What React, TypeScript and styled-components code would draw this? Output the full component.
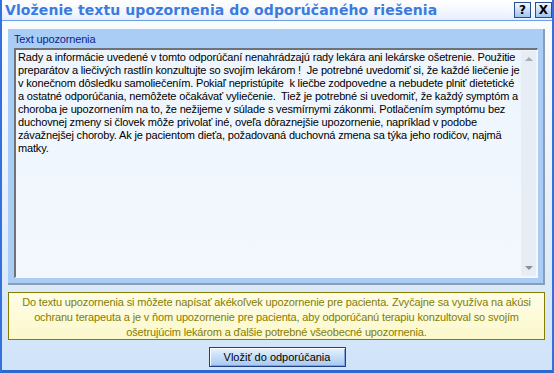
import React from "react";
import styled, { createGlobalStyle } from "styled-components";

const Global = createGlobalStyle`
  html, body { margin: 0; padding: 0; width: 554px; height: 373px; overflow: hidden; }
  body { font-family: Tahoma, "Liberation Sans", Arial, sans-serif; }
`;

const Window = styled.div`
  box-sizing: border-box;
  width: 554px;
  height: 373px;
  display: flex;
  flex-direction: column;
  border-left: 2px solid #3470de;
  border-right: 2px solid #3470de;
  border-bottom: 3px solid #2f66d0;
  background: linear-gradient(180deg, #fbfdff 0%, #eef5fd 40%, #cfe3f9 100%);
`;

const TitleBar = styled.div`
  height: 20px;
  flex: 0 0 20px;
  display: flex;
  align-items: center;
  justify-content: space-between;
  padding: 0 0 0 3px;
  border-bottom: 1px solid #6d9fe6;
  background: linear-gradient(180deg, #ffffff 0%, #f2f7fe 60%, #e4eefb 100%);
`;

const Title = styled.div`
  font-family: "DejaVu Sans", Verdana, sans-serif;
  font-weight: bold;
  font-size: 14px;
  letter-spacing: 0.1px;
  color: #3b7be0;
  white-space: nowrap;
`;

const CaptionButtons = styled.div`
  display: flex;
  gap: 4px;
  align-self: flex-start;
  margin-top: 2px;
`;

const CaptionButton = styled.div`
  box-sizing: border-box;
  width: 17px;
  height: 16px;
  border: 1px solid #2b4f8c;
  background: linear-gradient(180deg, #f2f8ff 0%, #c4dcf7 55%, #9fc3ef 100%);
  display: flex;
  align-items: center;
  justify-content: center;
  font-family: "DejaVu Sans", Verdana, sans-serif;
  font-weight: bold;
  font-size: 12px;
  color: #000;
  line-height: 1;
`;

const Body = styled.div`
  flex: 1;
  display: flex;
  flex-direction: column;
  align-items: stretch;
  padding: 8px 7px 4px 6px;
  gap: 7px;
`;

const Panel = styled.div`
  box-sizing: border-box;
  height: 256px;
  display: flex;
  flex-direction: column;
  background: #a9cdf4;
  border-right: 2px solid #8c9db3;
  border-bottom: 2px solid #8c9db3;
  padding: 4px 5px 5px 6px;
`;

const PanelLabel = styled.div`
  font-family: "Liberation Sans", Arial, sans-serif;
  font-size: 11px;
  letter-spacing: -0.15px;
  color: #0c1f8a;
  height: 15px;
  line-height: 13px;
`;

const TextField = styled.div`
  box-sizing: border-box;
  flex: 1;
  display: flex;
  border-top: 2px solid #6f7378;
  border-left: 2px solid #6f7378;
  border-right: 1px solid #f4f8fc;
  border-bottom: 1px solid #f4f8fc;
  background: linear-gradient(180deg, #eef5fd 0%, #f3f8fe 100%);
`;

const TextContent = styled.div`
  flex: 1;
  padding: 1px 0 0 2px;
  font-family: "Liberation Sans", Arial, sans-serif;
  font-size: 11px;
  letter-spacing: -0.16px;
  line-height: 13px;
  color: #000;
  white-space: pre;
  overflow: hidden;
`;

const ScrollBar = styled.div`
  width: 15px;
  margin: 1px 1px 1px 0;
  display: flex;
  flex-direction: column;
  justify-content: space-between;
  align-items: center;
  background: #e6edf4;
  padding: 6px 0;
  box-sizing: border-box;
`;

const Arrow = styled.div<{ $down?: boolean }>`
  width: 0;
  height: 0;
  border-left: 4px solid transparent;
  border-right: 4px solid transparent;
  ${(p) => (p.$down ? "border-top: 4px solid #8c8f94;" : "border-bottom: 4px solid #a9adb2;")}
`;

const Note = styled.div`
  box-sizing: border-box;
  height: 48px;
  border: 1px solid #857c00;
  background: linear-gradient(180deg, #fffde6 0%, #fbf8cc 100%);
  color: #857c00;
  font-family: "Liberation Sans", Arial, sans-serif;
  font-size: 11px;
  letter-spacing: -0.15px;
  line-height: 15px;
  text-align: center;
  padding-top: 2px;
  white-space: pre;
`;

const Footer = styled.div`
  display: flex;
  justify-content: center;
  padding-left: 1px;
`;

const Button = styled.button`
  box-sizing: border-box;
  width: 137px;
  height: 20px;
  padding: 0;
  border: 1px solid #1f3f86;
  box-shadow: inset 1px 1px 0 #ffffff, inset -1px -1px 0 #7ea6dc;
  background: linear-gradient(180deg, #e8f2fe 0%, #c6ddf8 50%, #a6c8f1 100%);
  font-family: "Liberation Sans", Arial, sans-serif;
  font-size: 11px;
  color: #000;
`;

const adviceLines = [
  "Rady a informácie uvedené v tomto odporúčaní nenahrádzajú rady lekára ani lekárske ošetrenie. Použitie",
  "preparátov a liečivých rastlín konzultujte so svojím lekárom !  Je potrebné uvedomiť si, že každé liečenie je",
  "v konečnom dôsledku samoliečením. Pokiaľ nepristúpite  k liečbe zodpovedne a nebudete plniť dietetické",
  "a ostatné odporúčania, nemôžete očakávať vyliečenie.  Tiež je potrebné si uvedomiť, že každý symptóm a",
  "choroba je upozornením na to, že nežijeme v súlade s vesmírnymi zákonmi. Potlačením symptómu bez",
  "duchovnej zmeny si človek môže privolať iné, oveľa dôraznejšie upozornenie, napríklad v podobe",
  "závažnejšej choroby. Ak je pacientom dieťa, požadovaná duchovná zmena sa týka jeho rodičov, najmä",
  "matky.",
];

const noteLines = [
  "Do textu upozornenia si môžete napísať akékoľvek upozornenie pre pacienta. Zvyčajne sa využíva na akúsi",
  "ochranu terapeuta a je v ňom upozornenie pre pacienta, aby odporúčanú terapiu konzultoval so svojím",
  "ošetrujúcim lekárom a ďalšie potrebné všeobecné upozornenia.",
];

export default function App() {
  return (
    <>
      <Global />
      <Window>
        <TitleBar>
          <Title>Vloženie textu upozornenia do odporúčaného riešenia</Title>
          <CaptionButtons>
            <CaptionButton>?</CaptionButton>
            <CaptionButton>X</CaptionButton>
          </CaptionButtons>
        </TitleBar>
        <Body>
          <Panel>
            <PanelLabel>Text upozornenia</PanelLabel>
            <TextField>
              <TextContent>{adviceLines.join("\n")}</TextContent>
              <ScrollBar>
                <Arrow />
                <Arrow $down />
              </ScrollBar>
            </TextField>
          </Panel>
          <Note>{noteLines.join("\n")}</Note>
          <Footer>
            <Button>Vložiť do odporúčania</Button>
          </Footer>
        </Body>
      </Window>
    </>
  );
}
